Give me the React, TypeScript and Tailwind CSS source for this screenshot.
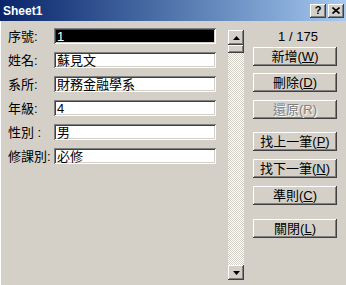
import React from 'react';

const FONT = "font-['Liberation_Sans','Noto_Sans_CJK_TC',sans-serif]";
const RAISED = 'shadow-[inset_-1px_-1px_#404040,inset_1px_1px_#ffffff,inset_-2px_-2px_#808080,inset_2px_2px_#d4d0c8]';
const SUNKEN = 'shadow-[inset_1px_1px_#808080,inset_-1px_-1px_#ffffff,inset_2px_2px_#404040,inset_-2px_-2px_#d4d0c8]';

const fields = [
    { label: '序號:', value: '1', selected: true },
    { label: '姓名:', value: '蘇見文' },
    { label: '系所:', value: '財務金融學系' },
    { label: '年級:', value: '4' },
    { label: '性別 :', value: '男' },
    { label: '修課別:', value: '必修' },
];

const buttons = [
    { text: '新增', key: 'W', mt: 'mt-[3px]' },
    { text: '刪除', key: 'D', mt: 'mt-[7px]' },
    { text: '還原', key: 'R', mt: 'mt-[8px]', disabled: true },
    { text: '找上一筆', key: 'P', mt: 'mt-[13px]' },
    { text: '找下一筆', key: 'N', mt: 'mt-[8px]' },
    { text: '準則', key: 'C', mt: 'mt-[8px]' },
    { text: '關閉', key: 'L', mt: 'mt-[14px]' },
];

const Arrow = ({ down }: { down?: boolean }) => (
    <svg width="7" height="4" viewBox="0 0 7 4">
        <polygon points={down ? '0,0 7,0 3.5,4' : '0,4 7,4 3.5,0'} fill="#000" />
    </svg>
);

export default function App() {
    return (
        <div className={`w-[346px] h-[285px] bg-[#d4d0c8] overflow-hidden flex flex-col ${FONT}`}>
            <div className="h-[21px] shrink-0 flex items-center justify-between bg-gradient-to-r from-[#0a246a] to-[#a6caf0] pl-[3px] pr-[2px]">
                <span className="text-white text-[12px] font-bold leading-none">Sheet1</span>
                <div className="flex gap-[2px]">
                    <div className={`w-[16px] h-[14px] bg-[#d4d0c8] ${RAISED} flex items-center justify-center text-[11px] font-bold leading-none text-black`}>?</div>
                    <div className={`w-[16px] h-[14px] bg-[#d4d0c8] ${RAISED} flex items-center justify-center`}>
                        <svg width="8" height="7" viewBox="0 0 8 7">
                            <path d="M0.5 0.5 L7.5 6.5 M7.5 0.5 L0.5 6.5" stroke="#000" strokeWidth="1.6" />
                        </svg>
                    </div>
                </div>
            </div>
            <div className="flex-1 flex shadow-[inset_1px_0_#ffffff]">
                <div className="pl-[8px] pt-[7px] flex flex-col gap-[8px]">
                    {fields.map(f => (
                        <div key={f.label} className="flex items-center h-[16px]">
                            <span className="w-[46px] text-[13px] leading-none text-black whitespace-nowrap">{f.label}</span>
                            <div className={`w-[162px] h-[16px] ${f.selected ? 'bg-black text-white' : 'bg-white text-black'} ${SUNKEN} flex items-center pl-[3px] text-[13px] leading-none`}>
                                {f.value}
                            </div>
                        </div>
                    ))}
                </div>
                <div className="ml-[12px] mt-[9px] w-[16px] h-[250px] flex flex-col bg-[repeating-conic-gradient(#ffffff_0_25%,#d4d0c8_0_50%)] bg-[length:2px_2px]">
                    <div className={`h-[15px] bg-[#d4d0c8] ${RAISED} flex items-center justify-center`}><Arrow /></div>
                    <div className={`h-[8px] bg-[#d4d0c8] ${RAISED}`} />
                    <div className="flex-1" />
                    <div className={`h-[15px] bg-[#d4d0c8] ${RAISED} flex items-center justify-center`}><Arrow down /></div>
                </div>
                <div className="ml-[9px] w-[84px] pt-[7px] flex flex-col">
                    <div className="h-[16px] flex items-center justify-center text-[13px] leading-none text-black pl-[6px]">1 / 175</div>
                    {buttons.map(b => (
                        <div key={b.key} className={`${b.mt} h-[19px] bg-[#d4d0c8] ${RAISED} flex items-center justify-center text-[13px] leading-none ${b.disabled ? 'text-[#808080] [text-shadow:1px_1px_0_#ffffff]' : 'text-black'}`}>
                            {b.text}(<span className={b.disabled ? '' : 'underline'}>{b.key}</span>)
                        </div>
                    ))}
                </div>
            </div>
        </div>
    );
}
